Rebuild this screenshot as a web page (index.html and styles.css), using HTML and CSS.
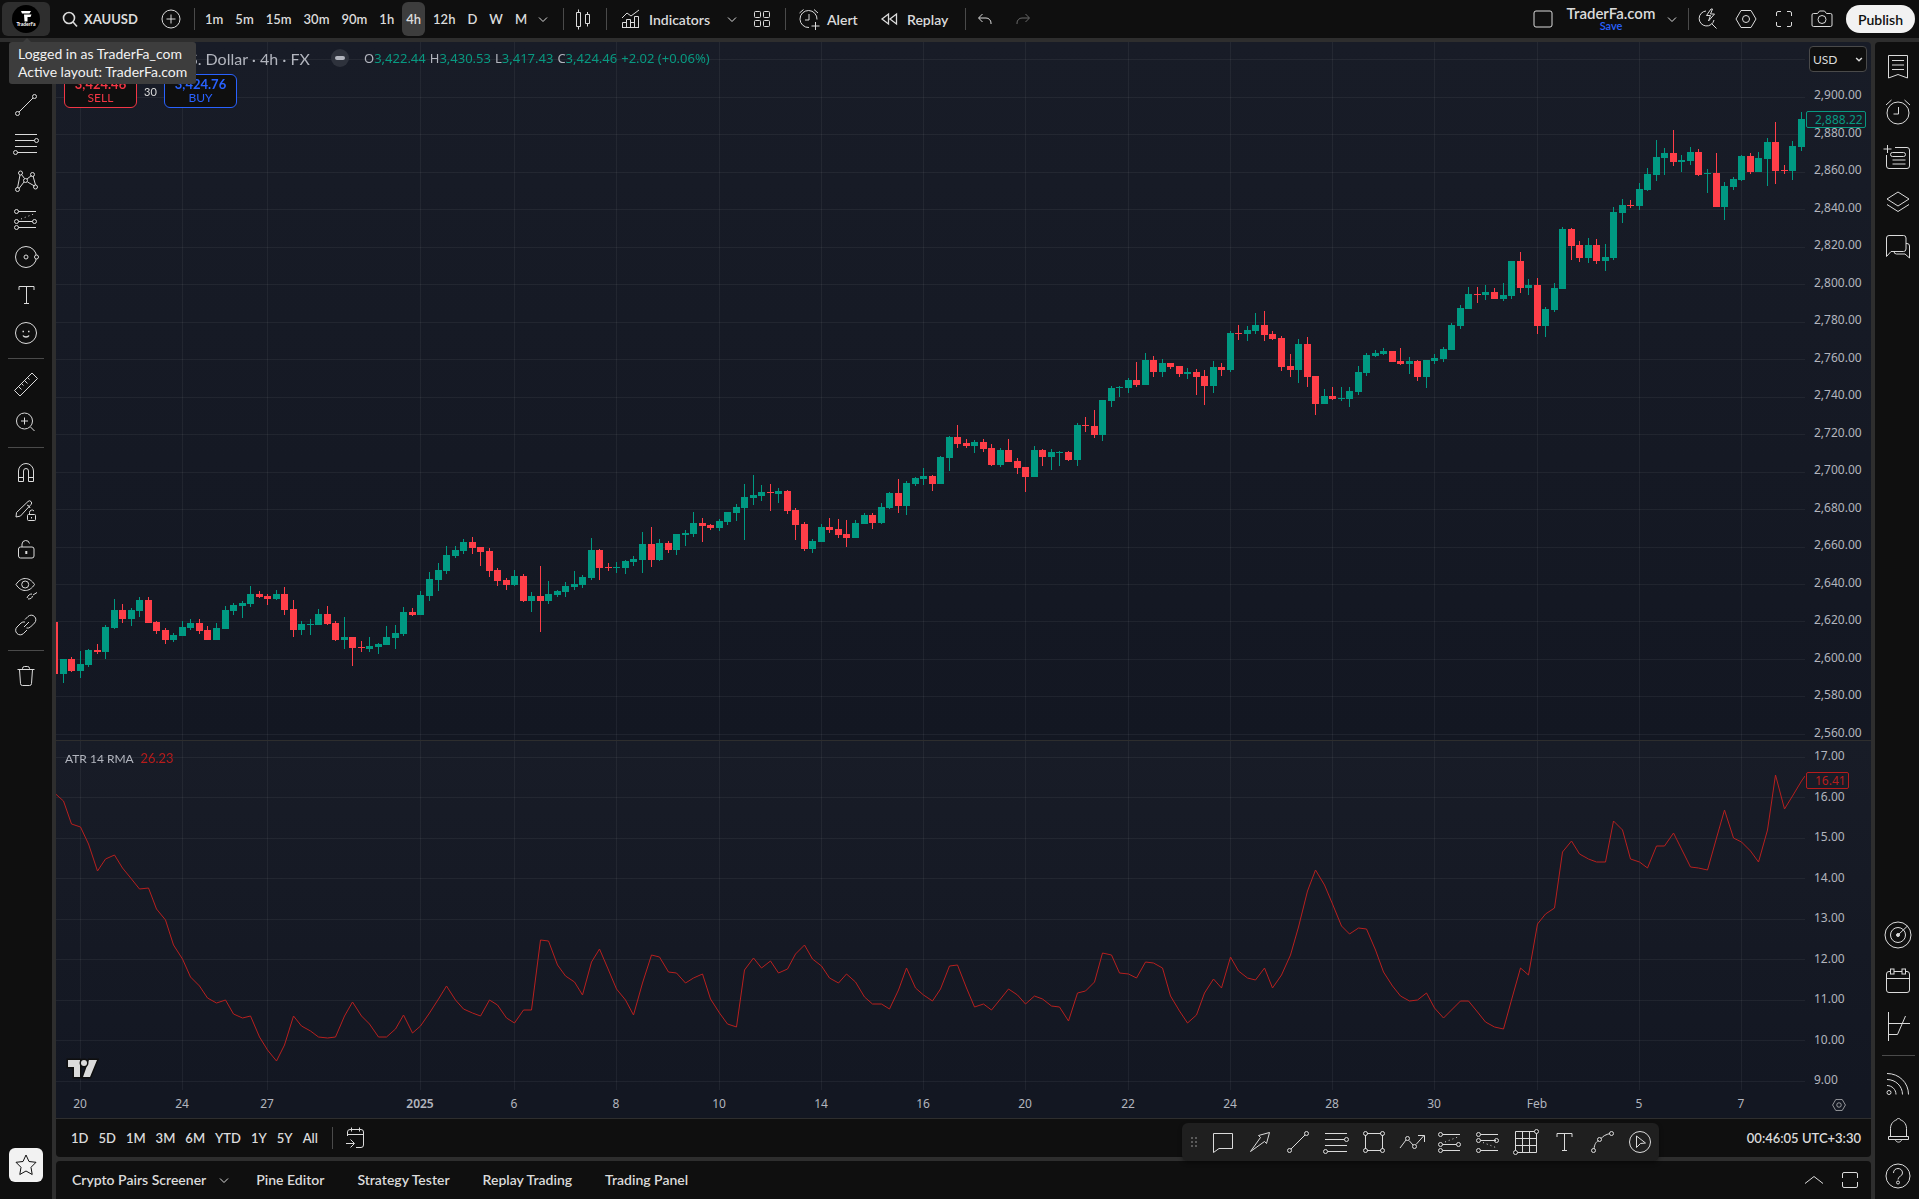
FILE: index.html
```html
<!DOCTYPE html>
<html lang="en">
<head>
  <meta charset="UTF-8">
  <title>XAUUSD 3,424.46 TraderFa.com</title>
  <meta name="viewport" content="width=device-width, initial-scale=1.0">
  <link rel="stylesheet" href="styles.css">
</head>
<body>

  <!-- icon sprite -->
  <svg class="sprite" aria-hidden="true">
    <symbol id="i-search" viewBox="0 0 28 28"><circle cx="13" cy="13" r="5.5" stroke-width="1.6"/><path d="M17 17l4 4.500" stroke-width="1.600"/></symbol>
    <symbol id="i-plus-circle" viewBox="0 0 28 28"><circle cx="14" cy="14" r="9"/><path d="M14 9.500v9M9.500 14h9"/></symbol>
    <symbol id="i-chevron" viewBox="0 0 28 28"><path d="M10 12.500l4 4 4-4"/></symbol>
    <symbol id="i-candles" viewBox="0 0 28 28"><path d="M7.500 7.500h4v14h-4zM9.500 4.500v3M9.500 21.500v3M16.500 9.500h4v9h-4zM18.500 7v2.500M18.500 18.500v3"/></symbol>
    <symbol id="i-indicators" viewBox="0 0 28 28"><path d="M5.500 22.500v-5h4v5M9.500 22.500v-8h4v8M13.500 22.500v-5h4v5M17.500 22.500v-11h4v11zM5 22.500h17M5 13l5-5 4 3 8-6"/></symbol>
    <symbol id="i-grid" viewBox="0 0 28 28"><rect x="6.500" y="6.500" width="6" height="6" rx="1"/><rect x="15.500" y="6.500" width="6" height="6" rx="1"/><rect x="6.500" y="15.500" width="6" height="6" rx="1"/><rect x="15.500" y="15.500" width="6" height="6" rx="1"/></symbol>
    <symbol id="i-alert-add" viewBox="0 0 28 28"><path d="M22 14.500A8.500 8.500 0 1 0 14 22.500M14 9v6h-4M4.500 8l4-3.500M19 4.500L23 8M20.500 17v8M16.500 21h8"/></symbol>
    <symbol id="i-replay" viewBox="0 0 28 28"><path d="M13.500 9v10l-6.500-5zM21.500 9v10L15 14z" stroke-width="1.300"/></symbol>
    <symbol id="i-undo" viewBox="0 0 28 28"><path d="M11.500 9l-4 4 4 4M8 13h7a5 5 0 0 1 5 5v1"/></symbol>
    <symbol id="i-redo" viewBox="0 0 28 28"><path d="M16.500 9l4 4-4 4M20 13h-7a5 5 0 0 0-5 5v1"/></symbol>
    <symbol id="i-square" viewBox="0 0 28 28"><rect x="5" y="6" width="18" height="16" rx="2"/></symbol>
    <symbol id="i-quick" viewBox="0 0 28 28"><path d="M12 6a7.500 7.500 0 1 0 8 9M17.500 18.500l5 5M17 4l-4.500 6.500h4L14.500 16l6-7h-4L18.500 4z"/></symbol>
    <symbol id="i-hex" viewBox="0 0 28 28"><path d="M9 5.500h10l5 8.500-5 8.500H9L4 14z"/><circle cx="14" cy="14" r="3.500"/></symbol>
    <symbol id="i-full" viewBox="0 0 28 28"><path d="M6.500 11V8a1.500 1.500 0 0 1 1.500-1.500h3M17 6.500h3A1.500 1.500 0 0 1 21.500 8v3M21.500 17v3a1.500 1.500 0 0 1-1.500 1.500h-3M11 21.500H8A1.500 1.500 0 0 1 6.500 20v-3"/></symbol>
    <symbol id="i-maximize" viewBox="0 0 28 28"><path d="M6.500 12V8A1.500 1.500 0 0 1 8 6.500h12A1.500 1.500 0 0 1 21.500 8v4M21.500 16v4a1.500 1.500 0 0 1-1.500 1.500H8A1.500 1.500 0 0 1 6.500 20v-4"/></symbol>
    <symbol id="i-camera" viewBox="0 0 28 28"><path d="M5.500 8.500h4l2-2.500h5l2 2.500h4a1.500 1.500 0 0 1 1.500 1.500v10a1.500 1.500 0 0 1-1.500 1.500h-17A1.500 1.500 0 0 1 4 20V10a1.500 1.500 0 0 1 1.500-1.500z"/><circle cx="14" cy="14.500" r="4"/></symbol>

    <symbol id="i-cross" viewBox="0 0 28 28"><path d="M14 5v18M5 14h18"/></symbol>
    <symbol id="i-line" viewBox="0 0 28 28"><path d="M7 21L21 7"/><circle cx="5.500" cy="22.500" r="2"/><circle cx="22.500" cy="5.500" r="2"/></symbol>
    <symbol id="i-fib" viewBox="0 0 28 28"><path d="M3 5.500h22M3 11.500h19.500M3 17.500h22M5.500 23.500H25"/><circle cx="24.500" cy="11.500" r="2"/><circle cx="3.500" cy="23.500" r="2"/></symbol>
    <symbol id="i-pattern" viewBox="0 0 28 28"><path d="M5.500 21L8 8M9.500 7.500l3 4M15 12l4.500-3.500M7 21.500l5-6.500M21 9l2.500 9M15.500 15l7 4"/><circle cx="8.500" cy="6" r="2"/><circle cx="5.500" cy="22.500" r="2"/><circle cx="13.500" cy="13.500" r="2"/><circle cx="20.500" cy="7.500" r="2"/><circle cx="23.500" cy="20" r="2"/></symbol>
    <symbol id="i-projection" viewBox="0 0 28 28"><path d="M6.500 6.500H24M6.500 16.500H20.500M6.500 22.500H24"/><path d="M9 14l14-5.500" stroke-dasharray="1 3"/><circle cx="4.500" cy="6.500" r="2"/><circle cx="4.500" cy="16.500" r="2"/><circle cx="22.500" cy="16.500" r="2"/><circle cx="4.500" cy="22.500" r="2"/></symbol>
    <symbol id="i-shape" viewBox="0 0 28 28"><circle cx="14" cy="14" r="10.500"/><circle cx="14" cy="14" r="2"/><circle class="cut" cx="24.500" cy="14" r="2"/></symbol>
    <symbol id="i-text" viewBox="0 0 28 28"><path d="M7 9V5.500h15V9M14.500 5.500v17M12 22.500h5"/></symbol>
    <symbol id="i-smile" viewBox="0 0 28 28"><circle cx="14" cy="14" r="10.500"/><path d="M11 16.500c1.200 2 4.800 2 6 0M10.500 12.500h1.500M16 12.500h1.500" stroke-width="1.400"/></symbol>
    <symbol id="i-ruler" viewBox="0 0 28 28"><path d="M2.500 20.500L20 3l5.500 5.500L8 26zM7 17l2.500 2.500M10 14l1.500 1.500M13 11l2.500 2.500M16 8l1.500 1.500"/></symbol>
    <symbol id="i-zoom" viewBox="0 0 28 28"><circle cx="12.500" cy="13" r="8"/><path d="M18.500 19l4 4M12.500 9.500v7M9 13h7"/></symbol>
    <symbol id="i-magnet" viewBox="0 0 28 28"><path d="M6.500 22.500V12a7.500 7.500 0 0 1 15 0v10.500h-5V12a2.500 2.500 0 0 0-5 0v10.500zM6.500 18.500h5M16.500 18.500h5"/></symbol>
    <symbol id="i-pen-lock" viewBox="0 0 28 28"><path d="M4 20l.5-4.500L16 4.500a2 2 0 0 1 3 3L8.500 19zM18 11a4 4 0 0 0-3-3"/><rect x="15.500" y="17.500" width="8" height="6" rx="1"/><path d="M17.500 17.500v-2a2.500 2.500 0 0 1 4.500-1.500M19.500 20v1.500"/></symbol>
    <symbol id="i-lock" viewBox="0 0 28 28"><rect x="6.500" y="12" width="15.500" height="11" rx="2"/><path d="M10 12V9a3.800 3.800 0 0 1 7.500-.500"/><path d="M14.300 16v3" stroke-width="2"/></symbol>
    <symbol id="i-eye" viewBox="0 0 28 28"><path d="M4 11.500c5-8 13.500-8 18.500 0-5 8-13.500 8-18.500 0z"/><circle cx="13.200" cy="11.500" r="3.500"/><path d="M15 25c1-3 3-4 5-4M16 26c3 0 4-1 4.500-3M21 22l4-2.500"/></symbol>
    <symbol id="i-link" viewBox="0 0 28 28"><path d="M12 16l5-5M13 8.500l3-3a4.500 4.500 0 0 1 6.500 6.500l-4 4a4.500 4.500 0 0 1-4 1M15 19l-3.500 3.500A4.500 4.500 0 0 1 5 16l4-4a4.500 4.500 0 0 1 4-1"/></symbol>
    <symbol id="i-trash" viewBox="0 0 28 28"><path d="M5.500 7.500h17M7.500 7.500l1 14a2 2 0 0 0 2 2h7a2 2 0 0 0 2-2l1-14M10.500 7.500v-1a2 2 0 0 1 2-2h3a2 2 0 0 1 2 2v1"/></symbol>
    <symbol id="i-star" viewBox="0 0 28 28"><path d="M14 4l3 6.500 7 .8-5 5 1.200 7.200-6.200-3.500-6.200 3.500L9 16.300l-5-5 7-.8z"/></symbol>

    <symbol id="i-watchlist" viewBox="0 0 28 28"><path d="M4.500 2.500h19v22.500L14 21.500 4.500 25zM8 7.500h12M8 12h12M8 16.500h12"/></symbol>
    <symbol id="i-alarm" viewBox="0 0 28 28"><circle cx="14" cy="15" r="11"/><path d="M14.500 9v7h-5M2 7l5.500-5M20.500 2L26 7"/></symbol>
    <symbol id="i-news" viewBox="0 0 28 28"><path d="M3.500 2v8M-.5 6h8M11 4.500h12A2.500 2.500 0 0 1 25.500 7v16a2.500 2.500 0 0 1-2.500 2.500H5A2.500 2.500 0 0 1 2.500 23V12M8.500 17h13M8.500 21h13"/><rect x="6.500" y="9.500" width="15" height="4" rx="2"/></symbol>
    <symbol id="i-layers" viewBox="0 0 28 28"><path d="M14 4l11 7-11 7-11-7zM3 16.500l11 7 11-7"/></symbol>
    <symbol id="i-chat" viewBox="0 0 28 28"><path d="M2.500 23.500V5A2.500 2.500 0 0 1 5 2.500h14.500A2.500 2.500 0 0 1 22 5v11a2.500 2.500 0 0 1-2.500 2.500H7zM22 10.500h1a2.500 2.500 0 0 1 2.500 2.500v12l-4.500-4h-8.500A2.500 2.500 0 0 1 10 18.500"/></symbol>
    <symbol id="i-radar" viewBox="0 0 28 28"><circle cx="14" cy="14" r="13"/><circle cx="14" cy="14" r="7.500"/><circle cx="14" cy="14" r="1.500" fill="currentColor"/><path d="M14 14L23.500 5"/></symbol>
    <symbol id="i-calendar" viewBox="0 0 28 28"><path d="M6.500 4.500H5A2.500 2.500 0 0 0 2.500 7v16A2.500 2.500 0 0 0 5 25.500h18a2.500 2.500 0 0 0 2.500-2.500V7A2.500 2.500 0 0 0 23 4.500h-1.500M10 4.500h8M2.500 11.500h23"/><rect x="6.500" y="2" width="3.500" height="5"/><rect x="18" y="2" width="3.500" height="5"/></symbol>
    <symbol id="i-levels" viewBox="0 0 28 28"><path d="M4.500-1v29M4.500 10.500H26M4.500 21.500h9L21.500 3"/></symbol>
    <symbol id="i-feed" viewBox="0 0 28 28"><circle cx="5" cy="22.500" r="2"/><path d="M3 15.500c5 0 9 4 9 9M3 9.500c8.500 0 15.500 6.500 15.500 15M3 3.500c12 0 21.500 9 21.500 21"/></symbol>
    <symbol id="i-bell" viewBox="0 0 28 28"><path d="M6.500 20.500v-8c0-5 3.500-8 6-8.500 0-2 4-2 4 0 2.500.5 6 3.500 6 8.500v8M4.500 20.500h20v3h-20zM11.500 23.500c0 3.500 6 3.500 6 0"/></symbol>
    <symbol id="i-help" viewBox="0 0 28 28"><circle cx="14" cy="14" r="12"/><path d="M9.500 11c0-6 9-6 9 0 0 3.500-4.500 3-4.500 6.500"/><circle cx="14" cy="20.500" r="1.500"/></symbol>

    <symbol id="i-goto" viewBox="0 0 28 28"><path d="M5.500 12V8A2.500 2.500 0 0 1 8 5.500h11A2.500 2.500 0 0 1 21.500 8v13a2.500 2.500 0 0 1-2.500 2.500h-5M5.500 10.500h16M9.500 3.500v4M17.500 3.500v4M4 19.500h8M8.500 15.500l4 4-4 4"/></symbol>
    <symbol id="i-comment" viewBox="0 0 28 28"><path d="M5.500 5.500h19v15H11l-5.500 4z"/></symbol>
    <symbol id="i-arrow" viewBox="0 0 28 28"><path d="M4.500 23.500l10-14-2-2 11-3-3 11-2-2z"/></symbol>
    <symbol id="i-rect" viewBox="0 0 28 28"><path d="M7 5.500h14M7 22.500h14M5.500 7v14M22.500 7v14"/><circle cx="5.500" cy="5.500" r="2"/><circle cx="22.500" cy="5.500" r="2"/><circle cx="5.500" cy="22.500" r="2"/><circle cx="22.500" cy="22.500" r="2"/></symbol>
    <symbol id="i-path" viewBox="0 0 28 28"><path d="M2 20l6-8M11 12.500l4 4.500M18 16.500L26 7.500M20 7.500h6.500V14"/><circle cx="9.500" cy="10.500" r="2"/><circle cx="16.500" cy="18.500" r="2"/></symbol>
    <symbol id="i-short" viewBox="0 0 28 28"><path d="M6.500 6.500H24M6.500 12.500H22M6.500 22.500H24"/><path d="M9 14.500l14 5.500" stroke-dasharray="1 3"/><circle cx="4.500" cy="6.500" r="2"/><circle cx="4.500" cy="12.500" r="2"/><circle cx="22.500" cy="12.500" r="2"/><circle cx="4.500" cy="22.500" r="2"/></symbol>
    <symbol id="i-mesh" viewBox="0 0 28 28"><path d="M3.500 3.500h21v21h-21zM10.500 3.500v21M17.500 3.500v21M3.500 10.500h21M3.500 17.500h21"/><circle class="cut" cx="24.500" cy="3.500" r="2"/><circle class="cut" cx="3.500" cy="24.500" r="2"/></symbol>
    <symbol id="i-curve" viewBox="0 0 28 28"><path d="M6 21c.5-5 2-7 4.500-8.500M13 10.500c2-2.500 5-4 9-5"/><circle cx="5.500" cy="22.500" r="2"/><circle cx="11.500" cy="11.500" r="2"/><circle cx="23.500" cy="5.500" r="2"/></symbol>
    <symbol id="i-cursor-circle" viewBox="0 0 28 28"><circle cx="14" cy="14" r="10.500"/><path d="M10.500 8l9 7-5 .5-4 4z"/></symbol>
    <symbol id="i-up" viewBox="0 0 28 28"><path d="M5 17.500l9-7 9 7"/></symbol>
  </svg>

  <header class="topbar">
    <button class="avatar" aria-label="Account">
      <svg width="28" height="28" viewBox="0 0 28 28"><circle cx="14" cy="14" r="14" fill="#000"/><path d="M9 6h10l-1.500 2.500H10zM12 9.500h7.500l-1 2.500h-3v4.500H12.500z" fill="#fff"/><text x="14" y="21">TraderFa</text></svg>
    </button>
    <button class="symbol"><svg class="icon"><use href="#i-search"/></svg>XAUUSD</button>
    <button class="tool" aria-label="Compare"><svg class="icon"><use href="#i-plus-circle"/></svg></button>
    <span class="vsep"></span>
    <div class="intervals">
      <button>1m</button><button>5m</button><button>15m</button><button>30m</button><button>90m</button><button>1h</button><button class="active">4h</button><button>12h</button><button>D</button><button>W</button><button>M</button>
    </div>
    <button class="chev" aria-label="More intervals"><svg class="icon"><use href="#i-chevron"/></svg></button>
    <span class="vsep"></span>
    <button class="tool" aria-label="Candles"><svg class="icon"><use href="#i-candles"/></svg></button>
    <span class="vsep"></span>
    <button class="labelled indicators"><svg class="icon"><use href="#i-indicators"/></svg>Indicators</button>
    <button class="chev" aria-label="Favorite indicators"><svg class="icon"><use href="#i-chevron"/></svg></button>
    <button class="tool" aria-label="Templates"><svg class="icon"><use href="#i-grid"/></svg></button>
    <span class="vsep"></span>
    <button class="labelled alert"><svg class="icon"><use href="#i-alert-add"/></svg>Alert</button>
    <button class="labelled replay"><svg class="icon"><use href="#i-replay"/></svg>Replay</button>
    <span class="vsep"></span>
    <button class="tool" aria-label="Undo"><svg class="icon"><use href="#i-undo"/></svg></button>
    <button class="tool dim" aria-label="Redo"><svg class="icon"><use href="#i-redo"/></svg></button>

    <div class="topbar-right">
      <button class="tool" aria-label="Layout setup"><svg class="icon"><use href="#i-square"/></svg></button>
      <button class="layout-name">TraderFa.com<span>Save</span></button>
      <button class="chev" aria-label="Manage layouts"><svg class="icon"><use href="#i-chevron"/></svg></button>
      <span class="vsep"></span>
      <button class="tool" aria-label="Quick search"><svg class="icon"><use href="#i-quick"/></svg></button>
      <button class="tool" aria-label="Settings"><svg class="icon"><use href="#i-hex"/></svg></button>
      <button class="tool" aria-label="Fullscreen"><svg class="icon"><use href="#i-full"/></svg></button>
      <button class="tool" aria-label="Snapshot"><svg class="icon"><use href="#i-camera"/></svg></button>
      <button class="publish">Publish</button>
    </div>
  </header>

  <div class="tooltip" role="tooltip">Logged in as TraderFa_com<br>Active layout: TraderFa.com</div>

  <nav class="drawbar">
    <button aria-label="Cross"><svg class="icon"><use href="#i-cross"/></svg></button>
    <button aria-label="Trend line"><svg class="icon"><use href="#i-line"/></svg></button>
    <button aria-label="Fib retracement"><svg class="icon"><use href="#i-fib"/></svg></button>
    <button aria-label="Patterns"><svg class="icon"><use href="#i-pattern"/></svg></button>
    <button aria-label="Projection"><svg class="icon"><use href="#i-projection"/></svg></button>
    <button aria-label="Shapes"><svg class="icon"><use href="#i-shape"/></svg></button>
    <button aria-label="Text"><svg class="icon"><use href="#i-text"/></svg></button>
    <button aria-label="Icons"><svg class="icon"><use href="#i-smile"/></svg></button>
    <hr>
    <button aria-label="Measure"><svg class="icon"><use href="#i-ruler"/></svg></button>
    <button aria-label="Zoom in"><svg class="icon"><use href="#i-zoom"/></svg></button>
    <hr>
    <button aria-label="Magnet"><svg class="icon"><use href="#i-magnet"/></svg></button>
    <button aria-label="Keep drawing"><svg class="icon"><use href="#i-pen-lock"/></svg></button>
    <button aria-label="Lock drawings"><svg class="icon"><use href="#i-lock"/></svg></button>
    <button aria-label="Hide drawings"><svg class="icon"><use href="#i-eye"/></svg></button>
    <button aria-label="Link"><svg class="icon"><use href="#i-link"/></svg></button>
    <hr>
    <button aria-label="Remove"><svg class="icon"><use href="#i-trash"/></svg></button>
    <button class="fav" aria-label="Favorites toolbar"><svg class="icon"><use href="#i-star"/></svg></button>
  </nav>

  <main class="center">
    <section class="chart-box">
      <div class="chart">
        <div class="pane price-pane">
          <canvas id="priceChart"></canvas>
          <div class="legend">
            <div class="legend-row">
              <h1>Gold Spot / U.S. Dollar · 4h · FX</h1>
              <span class="status"></span>
              <p class="ohlc">
                <span>O<b>3,422.44</b></span>
                <span>H<b>3,430.53</b></span>
                <span>L<b>3,417.43</b></span>
                <span>C<b>3,424.46</b></span>
                <span><b>+2.02 (+0.06%)</b></span>
              </p>
            </div>
            <div class="orders">
              <button class="sell"><strong>3,424.46</strong>SELL</button>
              <span class="spread">30</span>
              <button class="buy"><strong>3,424.76</strong>BUY</button>
            </div>
          </div>
          <div class="axis" id="priceAxis">
            <select class="currency" aria-label="Currency"><option>USD</option></select>
            <svg class="icon currency-arrow"><use href="#i-chevron"/></svg>
            <span class="tag tag-price">2,888.22</span>
          </div>
        </div>
        <div class="pane atr-pane">
          <canvas id="atrChart"></canvas>
          <p class="legend atr-legend">ATR 14 RMA <span>26.23</span></p>
          <svg class="tv-logo" width="34" height="22" viewBox="0 0 34 22"><path d="M3 2h12v17H9V9H3zM24 2h8l-7 17h-7z"/><circle cx="19" cy="5" r="3"/></svg>
          <div class="axis" id="atrAxis">
            <span class="tag tag-atr">16.41</span>
          </div>
        </div>
        <div class="time-axis" id="timeAxis">
          <button class="axis-settings" aria-label="Axis settings"><svg class="icon"><use href="#i-hex"/></svg></button>
        </div>
      </div>

      <div class="rangebar">
        <button>1D</button><button>5D</button><button>1M</button><button>3M</button><button>6M</button><button>YTD</button><button>1Y</button><button>5Y</button><button>All</button>
        <span class="vsep"></span>
        <button class="tool" aria-label="Go to"><svg class="icon"><use href="#i-goto"/></svg></button>
        <time>00:46:05 UTC+3:30</time>
        <div class="fav-toolbar">
          <span class="grip"></span>
          <button aria-label="Comment"><svg class="icon"><use href="#i-comment"/></svg></button>
          <button aria-label="Arrow"><svg class="icon"><use href="#i-arrow"/></svg></button>
          <button aria-label="Trend line"><svg class="icon"><use href="#i-line"/></svg></button>
          <button aria-label="Fib retracement"><svg class="icon"><use href="#i-fib"/></svg></button>
          <button aria-label="Rectangle"><svg class="icon"><use href="#i-rect"/></svg></button>
          <button aria-label="Path"><svg class="icon"><use href="#i-path"/></svg></button>
          <button aria-label="Long position"><svg class="icon"><use href="#i-projection"/></svg></button>
          <button aria-label="Short position"><svg class="icon"><use href="#i-short"/></svg></button>
          <button aria-label="Gann box"><svg class="icon"><use href="#i-mesh"/></svg></button>
          <button aria-label="Text"><svg class="icon"><use href="#i-text"/></svg></button>
          <button aria-label="Curve"><svg class="icon"><use href="#i-curve"/></svg></button>
          <button aria-label="Cursor"><svg class="icon"><use href="#i-cursor-circle"/></svg></button>
        </div>
      </div>
    </section>

    <footer class="tabs">
      <button>Crypto Pairs Screener</button>
      <button class="chev" aria-label="Screeners"><svg class="icon"><use href="#i-chevron"/></svg></button>
      <button>Pine Editor</button>
      <button>Strategy Tester</button>
      <button>Replay Trading</button>
      <button>Trading Panel</button>
      <div class="tabs-right">
        <button class="tool" aria-label="Open panel"><svg class="icon"><use href="#i-up"/></svg></button>
        <button class="tool" aria-label="Maximize panel"><svg class="icon"><use href="#i-maximize"/></svg></button>
      </div>
    </footer>
  </main>

  <aside class="sidebar">
    <button aria-label="Watchlist"><svg class="icon"><use href="#i-watchlist"/></svg></button>
    <button aria-label="Alerts"><svg class="icon"><use href="#i-alarm"/></svg></button>
    <button aria-label="News"><svg class="icon"><use href="#i-news"/></svg></button>
    <button aria-label="Object tree"><svg class="icon"><use href="#i-layers"/></svg></button>
    <button aria-label="Chats"><svg class="icon"><use href="#i-chat"/></svg></button>
    <div class="sidebar-bottom">
      <button aria-label="Screeners"><svg class="icon"><use href="#i-radar"/></svg></button>
      <button aria-label="Calendar"><svg class="icon"><use href="#i-calendar"/></svg></button>
      <button aria-label="DOM"><svg class="icon"><use href="#i-levels"/></svg></button>
      <hr>
      <button aria-label="Feed"><svg class="icon"><use href="#i-feed"/></svg></button>
      <button aria-label="Notifications"><svg class="icon"><use href="#i-bell"/></svg></button>
      <button aria-label="Help"><svg class="icon"><use href="#i-help"/></svg></button>
    </div>
  </aside>

  <script src="chart.js"></script>
</body>
</html>
```

FILE: styles.css
```css
* {
  box-sizing: border-box;
}

body {
  margin: 0;
  height: 100vh;
  overflow: hidden;
  display: grid;
  grid-template-columns: 52px minmax(0, 1fr) 44px;
  grid-template-rows: 38px minmax(0, 1fr);
  gap: 4px;
  background: #2e2e2e;
  color: #dbdbdb;
  font-family: Lato, "Open Sans", sans-serif;
  font-size: 14px;
}

button {
  font: inherit;
  color: inherit;
  background: none;
  border: none;
  padding: 0;
  cursor: pointer;
  white-space: nowrap;
}

.sprite {
  display: none;
}

.icon {
  display: block;
  width: 28px;
  height: 28px;
  flex: none;
  fill: none;
  stroke: currentColor;
  overflow: visible;
}

symbol {
  overflow: visible;
}

.cut {
  fill: #0f0f0f;
}

.vsep {
  width: 1px;
  height: 22px;
  background: #4a4a4a;
  flex: none;
}

/* top bar */
.topbar {
  grid-column: 1 / -1;
  display: flex;
  align-items: center;
  background: #0f0f0f;
  padding: 0 4px 0 2px;
  font-weight: 600;
}

.avatar {
  width: 48px;
  height: 34px;
  border-radius: 6px;
  background: #2e2e2e;
  display: flex;
  align-items: center;
  justify-content: center;
}

.avatar text {
  font: bold 5px Lato, sans-serif;
  fill: #fff;
  text-anchor: middle;
}

.symbol {
  display: flex;
  align-items: center;
  width: 102px;
  padding-left: 6px;
  font-size: 13px;
  font-weight: 700;
}

.tool {
  width: 28px;
  margin: 0 5px;
}

.dim {
  color: #6a6a6a;
}

.topbar > .tool + .vsep {
  margin-left: 4px;
}

.intervals {
  display: flex;
  flex: none;
  gap: 4px;
  width: 332px;
  margin-left: 6px;
  font-size: 13px;
}

.intervals button {
  height: 34px;
  padding: 0 4px;
  border-radius: 6px;
}

.intervals .active {
  background: #3d3d3d;
}

.intervals + .chev {
  margin-right: 4px;
}

.chev {
  width: 20px;
  display: flex;
  justify-content: center;
}

.topbar .chev + .vsep {
  margin-left: 6px;
}

.labelled {
  display: flex;
  align-items: center;
  gap: 4px;
}

.indicators {
  width: 105px;
  margin-left: 10px;
}

.indicators + .chev {
  margin-right: 1px;
}

.topbar .chev + .tool + .vsep {
  margin-left: 4px;
}

.alert {
  width: 80px;
  margin-left: 9px;
}

.replay {
  width: 90px;
}

.topbar-right {
  margin-left: auto;
  display: flex;
  align-items: center;
}

.layout-name {
  font-size: 15px;
  line-height: 14px;
  width: 98px;
  text-align: center;
}

.layout-name span {
  display: block;
  font-size: 11px;
  line-height: 12px;
  color: #2962ff;
}

.topbar-right .chev {
  margin-left: 2px;
}

.publish {
  width: 69px;
  height: 28px;
  margin-left: 5px;
  border-radius: 14px;
  background: #f2f2f2;
  color: #0f0f0f;
}

.tooltip {
  position: absolute;
  z-index: 10;
  top: 42px;
  left: 9px;
  padding: 3px 9px;
  border-radius: 3px;
  background: #3d3d3d;
  color: #f2f2f2;
  font-size: 14px;
  line-height: 18px;
  white-space: nowrap;
}

.tooltip::before {
  content: "";
  position: absolute;
  top: -4px;
  left: 14px;
  border: 4px solid transparent;
  border-top: 0;
  border-bottom-color: #3d3d3d;
}

/* left drawing bar */
.drawbar {
  background: #0f0f0f;
  display: flex;
  flex-direction: column;
  align-items: center;
  padding: 6px 0 17px;
}

.drawbar button {
  height: 38px;
  width: 38px;
  display: flex;
  align-items: center;
  justify-content: center;
}

.drawbar hr,
.sidebar hr {
  width: 36px;
  height: 1px;
  margin: 6px 0;
  border: none;
  background: #4a4a4a;
  flex: none;
}

.drawbar .fav {
  width: 34px;
  height: 34px;
  margin-top: auto;
  border-radius: 6px;
  background: #f2f2f2;
  color: #0f0f0f;
}

/* chart */
.center {
  display: flex;
  flex-direction: column;
  gap: 4px;
  min-width: 0;
}

.chart-box {
  flex: 1;
  min-height: 0;
  display: flex;
  flex-direction: column;
  border-radius: 4px;
}

.chart {
  flex: 1;
  min-height: 0;
  display: flex;
  flex-direction: column;
  color: #b2b5be;
}

.pane {
  display: grid;
  grid-template-columns: minmax(0, 1fr) 66px;
  grid-template-rows: minmax(0, 1fr);
  min-height: 0;
  background: linear-gradient(#181c27, #131722);
}

.price-pane {
  flex: 698 1 0;
  border-radius: 0 4px 0 0;
}

.atr-pane {
  flex: 349 1 0;
  margin-top: 1px;
}

.pane canvas {
  grid-area: 1 / 1;
  width: 100%;
  height: 100%;
}

.legend {
  grid-area: 1 / 1;
  margin: 0;
  padding: 6px 8px;
  z-index: 1;
  justify-self: start;
  align-self: start;
}

.legend-row {
  display: flex;
  align-items: center;
  height: 20px;
}

.legend h1 {
  margin: 0;
  width: 246px;
  font-size: 16px;
  font-weight: 400;
  white-space: nowrap;
  display: flex;
  justify-content: flex-end;
}

.status {
  width: 18px;
  height: 18px;
  margin: 0 15px 0 21px;
  border-radius: 50%;
  background: #2e323c;
  display: grid;
  place-items: center;
}

.status::before {
  content: "";
  width: 10px;
  height: 4px;
  border-radius: 2px;
  background: #b2b5be;
}

.ohlc {
  margin: 0;
  display: flex;
  gap: 4px;
  font-family: "Noto Sans", sans-serif;
  font-size: 13px;
}

.ohlc b {
  font-weight: 400;
  color: #089981;
}

.orders {
  display: flex;
  align-items: center;
  margin-top: 6px;
}

.orders button {
  width: 73px;
  height: 34px;
  border: 1px solid;
  border-radius: 6px;
  background: #0f0f0f;
  font-size: 12px;
  line-height: 13px;
}

.orders strong {
  display: block;
  font-size: 13px;
}

.sell {
  color: #f23645;
}

.buy {
  color: #2962ff;
}

.spread {
  width: 27px;
  text-align: center;
  font-size: 11px;
  color: #dbdbdb;
}

.axis {
  grid-area: 1 / 2;
  position: relative;
  display: flex;
  flex-direction: column;
  justify-content: space-between;
  padding: 46px 0 0 9px;
  font-family: "Noto Sans", sans-serif;
  font-size: 12px;
  line-height: 14px;
}

.atr-pane .axis {
  padding: 8px 0 3px 9px;
}

.tag {
  position: absolute;
  left: 1px;
  padding: 0 0 0 8px;
  line-height: 15px;
  border: 1px solid;
  border-radius: 2px;
  background: #181c27;
}

.tag-price {
  top: 69px;
  width: 60px;
  color: #089981;
}

.tag-atr {
  top: 31px;
  width: 43px;
  color: #b71c1c;
}

.currency {
  position: absolute;
  top: 4px;
  left: 4px;
  width: 58px;
  height: 26px;
  padding: 0 3px;
  appearance: none;
  border: 1px solid #4a4a4a;
  border-radius: 4px;
  background: #0f0f0f;
  color: #dbdbdb;
  font: 12px Lato, sans-serif;
}

.currency-arrow {
  position: absolute;
  top: 7px;
  left: 44px;
  width: 20px;
  height: 20px;
  color: #dbdbdb;
  stroke-width: 2px;
}

.atr-legend {
  padding: 8px 9px;
  font-size: 12px;
  line-height: 18px;
}

.atr-legend span {
  margin-left: 4px;
  font-size: 13px;
  color: #b71c1c;
}

.tv-logo {
  grid-area: 1 / 1;
  align-self: end;
  margin: 0 0 10px 9px;
  z-index: 1;
  fill: #dbdbdb;
  stroke: #0f0f0f;
  stroke-width: 3px;
  paint-order: stroke;
}

.time-axis {
  position: relative;
  height: 28px;
  flex: none;
  background: #131722;
  font-family: "Noto Sans", sans-serif;
  font-size: 12px;
  line-height: 28px;
}

.time-axis span {
  position: absolute;
  transform: translateX(-50%);
}

.time-axis .major {
  font-weight: 600;
}

.axis-settings {
  position: absolute;
  right: 23px;
  top: 6px;
  color: #dbdbdb;
}

.axis-settings .icon {
  width: 18px;
  height: 18px;
}

/* range bar */
.rangebar {
  position: relative;
  height: 39px;
  flex: none;
  display: flex;
  align-items: center;
  padding: 0 10px;
  border-top: 1px solid #2e2e2e;
  border-radius: 0 0 4px 4px;
  background: #0f0f0f;
  font-weight: 600;
  font-size: 13px;
}

.rangebar > button {
  padding: 0 5px;
}

.rangebar > .vsep {
  margin-left: 9px;
}

.rangebar > .tool {
  width: 28px;
  margin-left: 9px;
  padding: 0;
}

.rangebar time {
  margin-left: auto;
}

.fav-toolbar {
  position: absolute;
  right: 212px;
  top: 4px;
  z-index: 5;
  display: flex;
  align-items: center;
  height: 38px;
  padding: 0 0 0 5px;
  border-radius: 6px;
  background: #1f1f1f;
  box-shadow: 0 2px 4px rgba(0, 0, 0, 0.4);
}

.fav-toolbar .cut {
  fill: #1f1f1f;
}

.fav-toolbar button {
  width: 38px;
  display: flex;
  justify-content: center;
}

.grip {
  width: 8px;
  height: 12px;
  margin: 0 5px 0 3px;
  background: radial-gradient(circle, #5a5a5a 1px, transparent 1px) 0 0 / 4px 4px;
}

/* bottom tabs */
.tabs {
  height: 38px;
  flex: none;
  display: flex;
  align-items: center;
  gap: 33px;
  padding: 0 3px 1px 16px;
  border-radius: 4px 4px 0 0;
  background: #0f0f0f;
  font-weight: 600;
}

.tabs .chev {
  margin: 0 -11px 0 -25px;
}

.tabs-right {
  margin-left: auto;
  display: flex;
}

.tabs-right .tool {
  margin: 0 4px;
}

/* right bar */
.sidebar {
  display: flex;
  flex-direction: column;
  align-items: center;
  padding: 2px 0 0 2px;
  border-radius: 4px 0 0 0;
  background: #0f0f0f;
}

.sidebar button {
  height: 45px;
  display: flex;
  align-items: center;
}

.sidebar-bottom {
  margin-top: auto;
  display: flex;
  flex-direction: column;
  align-items: center;
}

.sidebar-bottom button {
  height: 46px;
}

.sidebar-bottom hr {
  width: 33px;
  margin: 5px 0;
}
```

FILE: chart.js
```js
const UP = "#009982";
const DOWN = "#ff3e48";
const GRID = "rgba(242, 242, 242, 0.06)";
const BAR_STEP = 8.52;
const FIRST_BAR = -3;
const LAST_BAR = 202;

// pane heights the series below are plotted against
const PRICE_H = 698;
const ATR_H = 349;
const ATR_TOP = 699;

// direction, high, body top, body bottom, low
const bars = `
r580,580,632,632 g617,617,632,641 r615,617,629,630 g609,622,629,636 g607,608,623,625 r602,608,610,612
g583,585,610,617 g557,568,586,587 r562,568,577,581 g566,568,577,584 g555,558,569,575 r555,558,581,581
r579,580,589,592 r586,588,598,602 g591,593,598,600 g579,585,594,594 g577,581,586,588 r577,581,589,592
r584,588,598,598 g581,586,598,598 g564,568,587,587 g561,563,569,573 g559,561,564,576 g544,552,562,565
r549,552,555,556 r552,554,557,563 g548,552,557,558 r545,552,568,573 r558,567,588,595 g579,582,588,593
g577,582,583,593 g567,572,583,583 r564,572,582,583 r579,581,598,599 g575,595,598,607 r595,595,606,624
r599,605,606,610 g595,604,607,610 g601,602,605,612 g584,595,603,603 g583,591,596,607 g565,570,592,594
r566,570,573,574 g549,553,573,573 g530,537,554,559 g521,528,538,549 g504,513,529,532 g504,508,514,516
g497,500,509,512 r495,500,506,512 r505,505,510,524 r506,509,529,535 r526,528,539,544 r536,538,543,548
g528,534,543,544 r532,534,559,560 g550,554,559,570 r524,554,559,590 g539,552,559,562 g548,549,553,555
g540,544,550,555 g529,542,545,548 g533,535,543,546 g496,508,536,538 r507,508,526,538 r521,525,526,529
g520,525,526,531 g518,519,526,532 g514,517,520,524 g490,502,518,531 r485,502,518,525 g497,501,518,519
r499,501,508,511 g492,492,508,513 g488,491,493,504 g470,481,492,495 r476,481,484,500 r482,483,486,488
g477,479,486,489 g470,470,480,483 g462,465,471,479 g442,455,466,498 g433,453,456,463 g443,450,454,459
r442,450,451,469 g446,449,452,461 r448,449,469,472 r466,468,483,498 r480,482,507,509 g497,499,507,511
g482,485,500,500 r476,485,488,491 r477,487,493,496 r478,492,496,505 g478,481,496,496 g471,473,482,482
r471,473,481,487 g461,465,481,482 g450,451,466,467 r437,451,464,471 g439,441,464,473 g435,436,442,444
g426,434,437,443 r433,434,442,449 g414,415,442,442 g394,395,416,429 r383,395,402,406 r397,401,404,406
g398,400,404,411 r397,400,407,410 r402,406,423,424 g406,408,423,425 r397,408,420,420 r416,419,426,432
r425,425,435,450 g404,408,435,435 r407,408,415,424 g407,410,415,428 g409,410,411,424 r409,410,418,419
g381,383,418,424 r375,383,384,390 r368,384,393,396 g358,358,393,399 g344,346,359,365 g344,345,346,355
g336,338,346,351 r320,338,343,345 g311,318,343,343 r314,318,330,335 g317,321,330,335 r321,321,325,327
r324,324,332,335 g326,330,332,337 r327,330,335,353 r328,334,344,363 g319,325,344,351 r321,325,328,334
g289,291,328,330 r283,291,292,298 g284,288,292,299 g271,283,289,292 r269,283,293,299 r289,292,297,298
r294,296,325,329 r312,324,328,335 g297,302,328,341 r295,302,335,345 r334,334,362,373 g347,354,362,362
r345,354,357,358 g345,356,357,359 g345,349,357,365 g324,330,350,353 g311,313,331,334 g308,311,314,315
g306,309,312,313 r309,309,320,320 r306,319,322,323 g315,319,322,332 r318,319,335,339 g318,318,335,346
g312,316,319,322 g305,307,317,320 g281,283,308,308 g263,266,284,287 g245,252,267,267 r245,252,253,261
g243,250,253,258 r246,250,257,257 g241,253,257,259 g219,219,254,257 r210,219,246,251 g237,243,246,253
r236,243,284,292 g265,267,284,295 g241,246,268,270 g185,187,247,247 r186,187,204,218 r199,203,216,220
g196,203,216,221 r197,203,219,222 g202,215,219,229 g165,170,216,218 g157,163,171,181 r158,163,164,166
g141,147,164,168 g126,132,148,149 g98,115,133,139 g106,111,116,133 r88,111,120,124 g113,118,120,130
g105,110,119,123 r107,110,133,134 g127,131,132,151 r111,131,165,165 g140,144,165,178 g135,137,145,148
g113,114,138,139 r111,114,130,132 g110,116,130,130 g96,100,117,144 r80,100,129,142 r123,128,129,132
g99,104,129,138 g70,77,105,109
`.trim().split(/\s+/).map(s => [s[0], ...s.slice(1).split(",").map(Number)]);

const atr = [
  751, 759, 782, 785, 802, 829, 817, 813, 826, 837, 847, 846, 867, 878, 903, 917, 935, 944, 956, 961,
  958, 972, 976, 974, 995, 1008, 1019, 1003, 974, 984, 989, 995, 996, 995, 974, 960, 974, 982, 995, 995,
  987, 973, 991, 984, 971, 957, 944, 958, 967, 971, 974, 958, 963, 976, 981, 968, 968, 898, 899, 923,
  934, 940, 953, 920, 907, 928, 947, 958, 973, 941, 913, 915, 930, 931, 941, 936, 932, 957, 971, 982,
  985, 928, 916, 926, 919, 931, 927, 912, 903, 917, 924, 936, 941, 932, 940, 955, 962, 962, 967, 948,
  926, 946, 953, 959, 947, 924, 923, 946, 965, 962, 968, 957, 947, 953, 962, 954, 957, 964, 965, 979,
  951, 949, 940, 911, 913, 931, 932, 936, 920, 921, 926, 954, 969, 981, 973, 951, 937, 946, 915, 929,
  936, 938, 926, 946, 933, 913, 885, 849, 828, 843, 862, 884, 892, 886, 887, 908, 930, 944, 954, 959,
  958, 951, 966, 976, 968, 959, 959, 970, 980, 985, 987, 958, 926, 933, 882, 872, 866, 810, 799, 812,
  817, 820, 820, 779, 788, 817, 820, 826, 804, 804, 791, 807, 825, 826, 828, 796, 768, 796, 800, 809,
  820, 788, 733, 767, 754, 739
];

const ticks = [
  [0, "20"], [12, "24"], [22, "27"], [40, "2025"], [51, "6"], [63, "8"], [75, "10"], [87, "14"], [99, "16"],
  [111, "20"], [123, "22"], [135, "24"], [147, "28"], [159, "30"], [171, "Feb"], [183, "5"], [195, "7"]
];

const priceCanvas = document.getElementById("priceChart");
const atrCanvas = document.getElementById("atrChart");
const timeAxis = document.getElementById("timeAxis");

function barX(i, width) {
  return Math.floor(width - 3.8 - (LAST_BAR - i) * BAR_STEP);
}

function setup(canvas) {
  canvas.width = canvas.clientWidth;
  canvas.height = canvas.clientHeight;
  return canvas.getContext("2d");
}

function drawGrid(ctx, first, step, count, scale) {
  const { width, height } = ctx.canvas;
  ctx.fillStyle = GRID;
  for (let k = 0; k < count; k++) {
    ctx.fillRect(0, Math.floor((first + k * step) * scale), width, 1);
  }
  ticks.forEach(([i]) => ctx.fillRect(barX(i, width), 0, 1, height));
}

function drawPrice() {
  const ctx = setup(priceCanvas);
  const { width, height } = priceCanvas;
  const scale = height / PRICE_H;
  drawGrid(ctx, 17.9, 37.47, 19, scale);

  bars.forEach(([dir, high, top, bottom, low], n) => {
    const x = barX(FIRST_BAR + n, width);
    ctx.fillStyle = dir === "g" ? UP : DOWN;
    ctx.fillRect(x, Math.round(high * scale), 1, Math.round((low - high) * scale));
    ctx.fillRect(x - 3, Math.round(top * scale), 7, Math.max(1, Math.round((bottom - top) * scale)));
  });
}

function drawAtr() {
  const ctx = setup(atrCanvas);
  const { width, height } = atrCanvas;
  const scale = height / ATR_H;
  drawGrid(ctx, 16.3, 40.5, 9, scale);

  ctx.strokeStyle = "#b7201f";
  ctx.lineWidth = 1;
  ctx.beginPath();
  atr.forEach((v, n) => ctx.lineTo(barX(FIRST_BAR + n, width) + 0.5, (v - ATR_TOP) * scale));
  ctx.lineTo(width, (734 - ATR_TOP) * scale);
  ctx.stroke();
}

function addAxisLabels(id, from, to, step) {
  const axis = document.getElementById(id);
  for (let v = from; v >= to; v -= step) {
    const label = document.createElement("span");
    label.textContent = v.toLocaleString("en-US", { minimumFractionDigits: 2 });
    axis.appendChild(label);
  }
}

function placeTimeLabels() {
  timeAxis.querySelectorAll("span").forEach(el => el.remove());
  ticks.forEach(([i, text]) => {
    const label = document.createElement("span");
    label.textContent = text;
    if (text === "2025") label.className = "major";
    label.style.left = barX(i, priceCanvas.width) + "px";
    timeAxis.appendChild(label);
  });
}

function render() {
  drawPrice();
  drawAtr();
  placeTimeLabels();
}

addAxisLabels("priceAxis", 2900, 2560, 20);
addAxisLabels("atrAxis", 17, 9, 1);
render();
window.addEventListener("resize", render);
```
